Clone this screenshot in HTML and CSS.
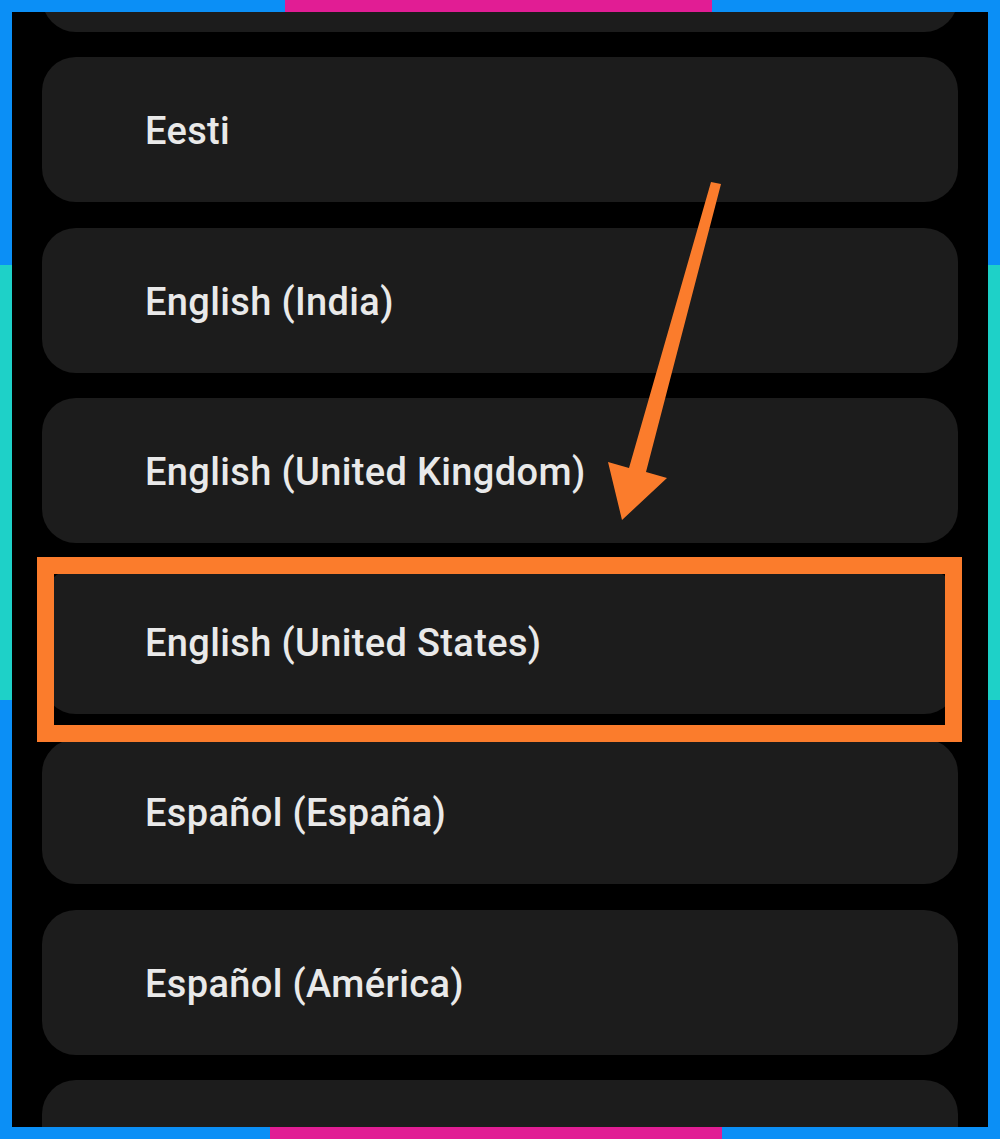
FILE: index.html
```html
<!DOCTYPE html>
<html>
<head>
<meta charset="utf-8">
<link rel="stylesheet" href="styles.css">
</head>
<body>
<div class="frame">
  <div class="screen">
    <div class="list">
      <div class="item"></div>
      <div class="item"><span class="label">Eesti</span></div>
      <div class="item"><span class="label">English (India)</span></div>
      <div class="item"><span class="label">English (United Kingdom)</span></div>
      <div class="item"><span class="label">English (United States)</span></div>
      <div class="item"><span class="label">Español (España)</span></div>
      <div class="item"><span class="label">Español (América)</span></div>
      <div class="item"></div>
    </div>
    <div class="highlight"></div>
    <svg class="arrow" width="1000" height="1139" viewBox="0 0 1000 1139">
      <polygon points="711,182 721,184 646,472 667,478 622,520 608,462 629,468" fill="#fb7c2c"/>
    </svg>
  </div>
</div>
</body>
</html>
```
FILE: styles.css
```css
html, body {
  margin: 0;
  padding: 0;
  background: #000;
}
.frame {
  width: 1000px;
  height: 1139px;
  box-sizing: border-box;
  padding: 12px;
  background:
    linear-gradient(to right, #0b8ff6 0 285px, #e11d94 285px 712px, #0b8ff6 712px) top left / 100% 12px no-repeat,
    linear-gradient(to right, #0b8ff6 0 270px, #e11d94 270px 722px, #0b8ff6 722px) bottom left / 100% 12px no-repeat,
    linear-gradient(to bottom, #0b8ff6 0 265px, #1ed1c8 265px 700px, #0b8ff6 700px) 0 0 / 100% 100% no-repeat;
}
.screen {
  position: relative;
  width: 976px;
  height: 1115px;
  background: #000;
  overflow: hidden;
}
.list {
  display: flex;
  flex-direction: column;
  gap: 25.5px;
  padding: 0 30px;
  margin-top: -125.5px;
}
.item {
  flex: 0 0 145px;
  height: 145px;
  background: #1c1c1c;
  border-radius: 34px;
  display: flex;
  align-items: center;
  padding-left: 103px;
}
.label {
  font-family: Roboto, "Noto Sans", sans-serif;
  font-size: 38px;
  font-weight: 500;
  color: #e9e9e9;
  letter-spacing: 0.35px;
  margin-top: 3px;
}
.highlight {
  position: absolute;
  left: 25px;
  top: 545px;
  width: 925px;
  height: 185px;
  box-sizing: border-box;
  border: 17px solid #fb7c2c;
}
.arrow {
  position: absolute;
  left: -12px;
  top: -12px;
}
```
